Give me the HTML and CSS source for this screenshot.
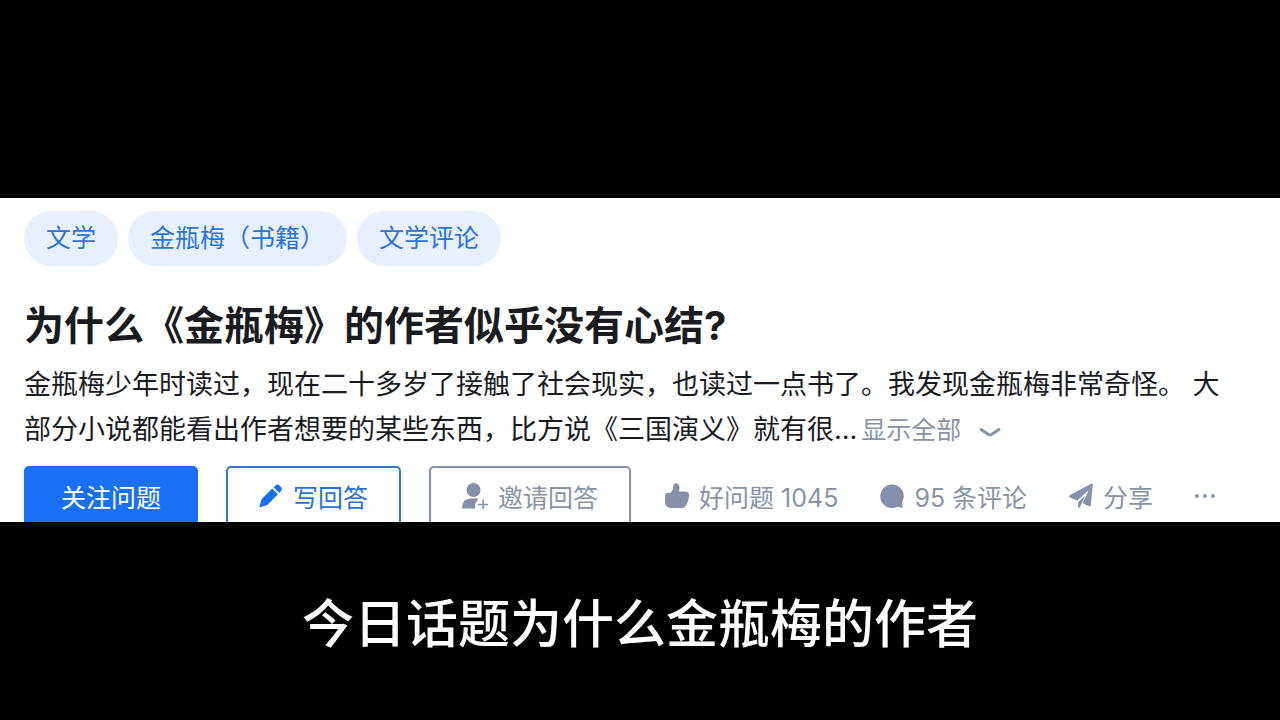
FILE: index.html
```html
<!DOCTYPE html>
<html lang="zh-CN">
<head>
    <meta charset="UTF-8">
    <meta name="viewport" content="width=device-width, initial-scale=1.0">
    <title>为什么《金瓶梅》的作者似乎没有心结?</title>
    <link rel="stylesheet" href="styles.css">
</head>
<body>
    <main class="question">
        <nav class="tags">
            <a class="tag" href="#">文学</a>
            <a class="tag" href="#">金瓶梅（书籍）</a>
            <a class="tag" href="#">文学评论</a>
        </nav>

        <h1 class="title">为什么《金瓶梅》的作者似乎没有心结?</h1>

        <div class="detail">
            <p class="detail-text">金瓶梅少年时读过，现在二十多岁了接触了社会现实，也读过一点书了。我发现金瓶梅非常奇怪。 大部分小说都能看出作者想要的某些东西，比方说《三国演义》就有很...</p><button type="button" class="more">显示全部<svg class="chevron" viewBox="0 0 22 12"><path d="M2 2.5 9.6 7.6Q11 8.5 12.4 7.6L20 2.5"/></svg></button>
        </div>

        <div class="actions">
            <div class="buttons">
                <button type="button" class="btn btn-follow">关注问题</button>
                <button type="button" class="btn btn-write">
                    <svg class="icon" viewBox="0 0 24 24"><path d="M1 23.2Q.3 23.2.5 22.3L2.3 15.9Q2.5 15.2 3 14.7L13.2 4.5 19 10.3 8.800 20.500Q8.300 21 7.600 21.200ZM14.600 3.200 16.400 1.400Q18.400-.4 20.300 1.400L22.100 3.200Q23.900 5.100 22.100 7.100L20.300 8.900Z"/></svg>
                    写回答
                </button>
                <button type="button" class="btn btn-invite">
                    <svg class="icon icon-wide" viewBox="0 0 26 26"><circle cx="11.500" cy="7" r="7"/><path d="M0 25.500Q0 15.500 8.500 15.500H16.500L14.500 18.500Q13 20 13 22V25.500ZM20.300 16.500H21.900V20.700H26V22.300H21.900V26H20.300V22.300H16V20.700H20.300Z"/></svg>
                    邀请回答
                </button>
            </div>
            <div class="links">
                <button type="button" class="link">
                    <svg class="icon" viewBox="0 0 24 24"><path d="M0 12Q0 9 3 9H4.500Q7.200 8.300 8 4.500L8.300 2Q8.700-.8 11-.8 14.500-.5 14.500 4.200 14.500 6 13.700 7.600H20.500Q24.500 7.900 24 12 23.500 18 21 21.500 19.500 24 16.500 24H6Q0 23.500 0 18Z"/></svg>
                    好问题 1045
                </button>
                <button type="button" class="link">
                    <svg class="icon" viewBox="0 0 24 24"><path d="M12 .5A11.700 11.700 0 0 0 .3 12.200C.3 18.800 5.400 24 12 24Q15.200 24 17.800 22.800L21.800 23.800Q22.800 24 22.700 23L22 18.200Q23.800 15.600 23.800 12.200A11.700 11.700 0 0 0 12 .5Z"/></svg>
                    95 条评论
                </button>
                <button type="button" class="link">
                    <svg class="icon" viewBox="0 0 24 24"><path d="M.5 11.300 22.600-.5Q24-.9 23.800.6L21.800 21.500Q21.600 22.800 20.300 22.300L13.600 19.200 19.700 6.300 8.200 16.400 1 13.600Q-1 12.500.5 11.300ZM9.200 17.900 16.200 11.800 12.300 20.300 10.500 23.500Q9.200 25.200 9 23Z"/></svg>
                    分享
                </button>
                <button type="button" class="link" aria-label="更多">
                    <svg class="dots" viewBox="0 0 20 24"><circle cx="2" cy="12" r="1.900"/><circle cx="10" cy="12" r="1.900"/><circle cx="18" cy="12" r="1.900"/></svg>
                </button>
            </div>
        </div>
    </main>

    <p class="subtitle">今日话题为什么金瓶梅的作者</p>
</body>
</html>
```
FILE: styles.css
```css
* {
    margin: 0;
    padding: 0;
    box-sizing: border-box;
}
body {
    min-height: 100vh;
    padding-top: 27.5vh;
    background-color: #000;
    font-family: Inter, "Noto Sans CJK SC", sans-serif;
}
button {
    font-family: inherit;
    background: none;
    border: none;
    cursor: pointer;
}
.question {
    height: 45vh;
    padding: 13px 24px 0;
    overflow: hidden;
    background-color: #fff;
}
.tags {
    display: flex;
    gap: 10px;
}
.tag {
    padding: 0 22px;
    border-radius: 27px;
    background-color: #e8f0fe;
    color: #2b74dc;
    font-size: 25px;
    line-height: 55px;
    text-decoration: none;
}
.title {
    margin-top: 32px;
    color: #1a1b1f;
    font-size: 40px;
    font-weight: bold;
    line-height: 56px;
}
.detail {
    margin: 8px 16px 0 0;
    color: #1a1b1f;
    font-size: 27px;
    line-height: 45px;
}
.detail-text {
    display: inline;
}
.more {
    margin-left: 4px;
    color: #8993a8;
    font-size: 25px;
}
.chevron {
    width: 22px;
    height: 12px;
    margin-left: 18px;
    fill: none;
    stroke: currentColor;
    stroke-width: 3;
    stroke-linecap: round;
}
.actions {
    display: flex;
    align-items: center;
    gap: 34px;
    margin-top: 14px;
    white-space: nowrap;
}
.buttons {
    display: flex;
    gap: 28px;
}
.links {
    display: flex;
    gap: 42px;
}
.btn,
.link {
    display: flex;
    align-items: center;
    gap: 10px;
    height: 60px;
    font-size: 25px;
}
.btn {
    padding: 0 31px;
    border: 2px solid;
    border-radius: 5px;
}
.btn-follow {
    padding: 0 35px;
    border-color: #1a70f5;
    background-color: #1a70f5;
    color: #fff;
}
.btn-write {
    border-color: #3478c8;
    color: #2b70d8;
}
.btn-invite {
    border-color: #8491a9;
    color: #8993a8;
}
.link {
    color: #8993a8;
}
.icon {
    width: 24px;
    height: 24px;
    overflow: visible;
    fill: #8491aa;
}
.icon-wide {
    width: 26px;
    height: 26px;
}
.btn-write .icon {
    fill: #1a70ee;
}
.dots {
    width: 20px;
    height: 24px;
    fill: #8491aa;
}
.subtitle {
    margin-top: 65px;
    color: #fff;
    font-size: 52px;
    font-weight: 500;
    line-height: 76px;
    text-align: center;
}
```
